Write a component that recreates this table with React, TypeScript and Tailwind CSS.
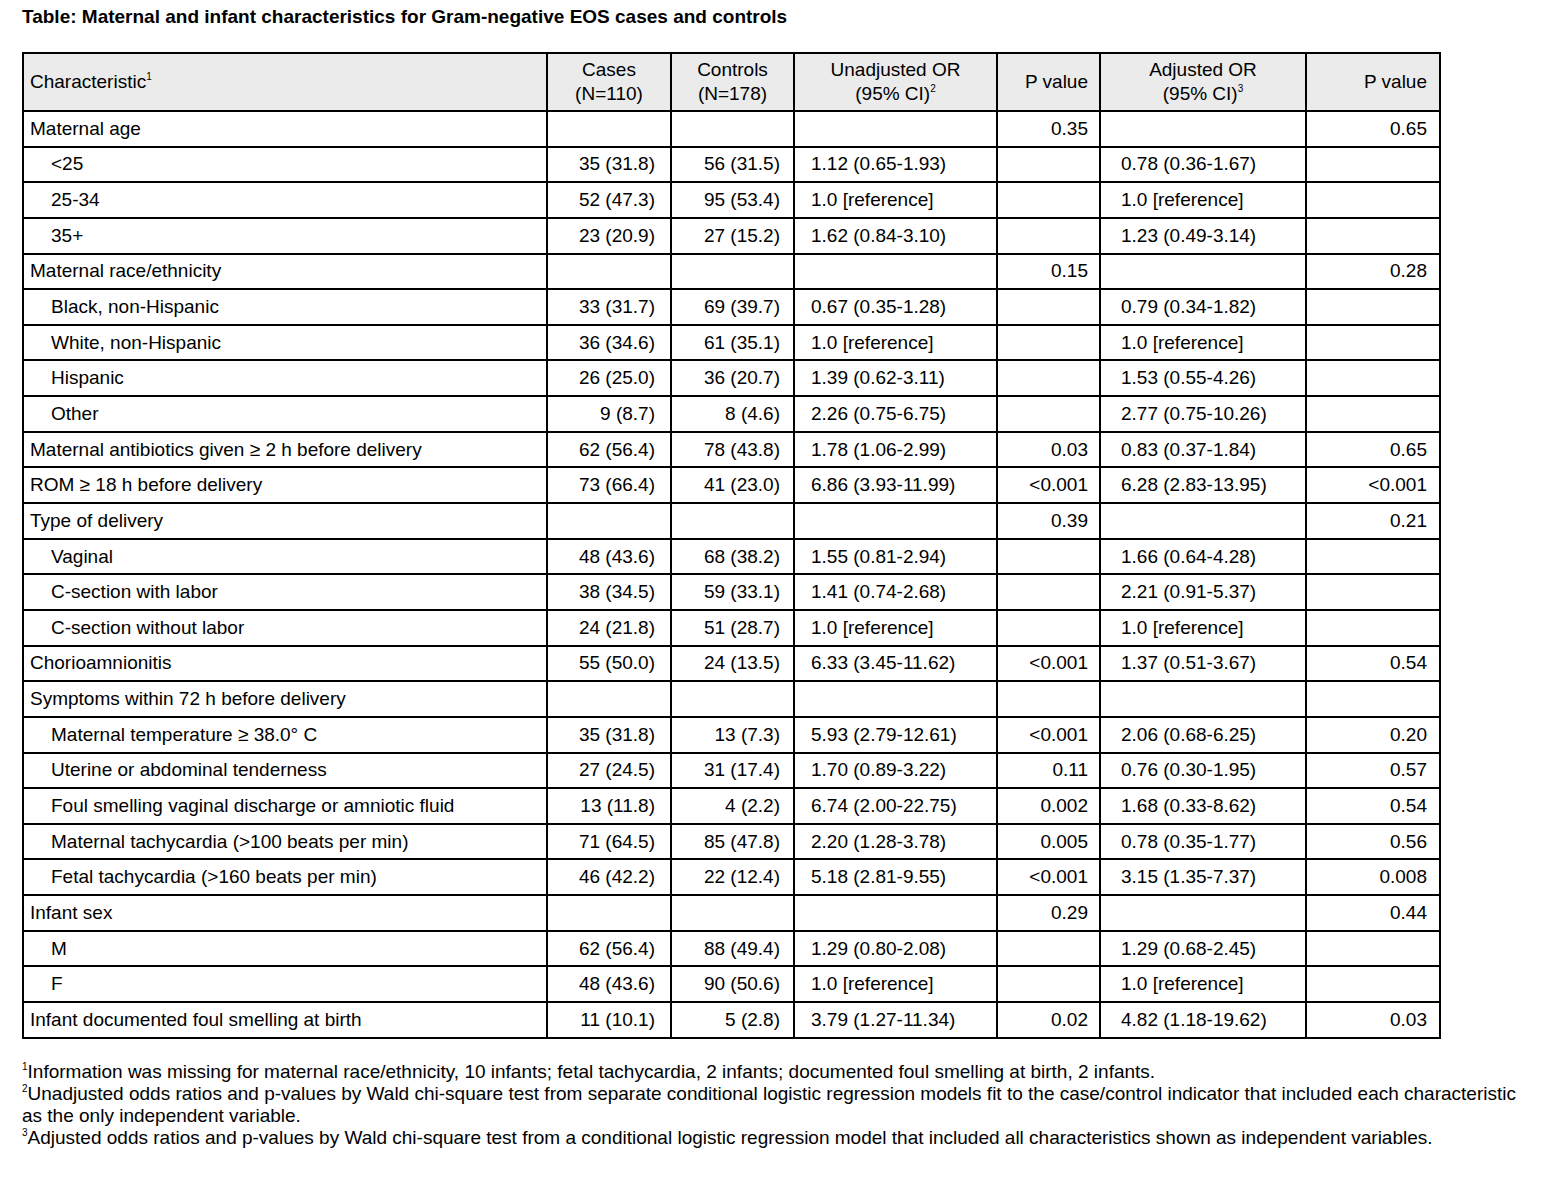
type Row = {
  label: string;
  indent?: boolean;
  cases?: string;
  controls?: string;
  uor?: string;
  up?: string;
  aor?: string;
  ap?: string;
};

const rows: Row[] = [
  { label: "Maternal age", up: "0.35", ap: "0.65" },
  { label: "<25", indent: true, cases: "35 (31.8)", controls: "56 (31.5)", uor: "1.12 (0.65-1.93)", aor: "0.78 (0.36-1.67)" },
  { label: "25-34", indent: true, cases: "52 (47.3)", controls: "95 (53.4)", uor: "1.0 [reference]", aor: "1.0 [reference]" },
  { label: "35+", indent: true, cases: "23 (20.9)", controls: "27 (15.2)", uor: "1.62 (0.84-3.10)", aor: "1.23 (0.49-3.14)" },
  { label: "Maternal race/ethnicity", up: "0.15", ap: "0.28" },
  { label: "Black, non-Hispanic", indent: true, cases: "33 (31.7)", controls: "69 (39.7)", uor: "0.67 (0.35-1.28)", aor: "0.79 (0.34-1.82)" },
  { label: "White, non-Hispanic", indent: true, cases: "36 (34.6)", controls: "61 (35.1)", uor: "1.0 [reference]", aor: "1.0 [reference]" },
  { label: "Hispanic", indent: true, cases: "26 (25.0)", controls: "36 (20.7)", uor: "1.39 (0.62-3.11)", aor: "1.53 (0.55-4.26)" },
  { label: "Other", indent: true, cases: "9 (8.7)", controls: "8 (4.6)", uor: "2.26 (0.75-6.75)", aor: "2.77 (0.75-10.26)" },
  { label: "Maternal antibiotics given \u2265 2 h before delivery", cases: "62 (56.4)", controls: "78 (43.8)", uor: "1.78 (1.06-2.99)", up: "0.03", aor: "0.83 (0.37-1.84)", ap: "0.65" },
  { label: "ROM \u2265 18 h before delivery", cases: "73 (66.4)", controls: "41 (23.0)", uor: "6.86 (3.93-11.99)", up: "<0.001", aor: "6.28 (2.83-13.95)", ap: "<0.001" },
  { label: "Type of delivery", up: "0.39", ap: "0.21" },
  { label: "Vaginal", indent: true, cases: "48 (43.6)", controls: "68 (38.2)", uor: "1.55 (0.81-2.94)", aor: "1.66 (0.64-4.28)" },
  { label: "C-section with labor", indent: true, cases: "38 (34.5)", controls: "59 (33.1)", uor: "1.41 (0.74-2.68)", aor: "2.21 (0.91-5.37)" },
  { label: "C-section without labor", indent: true, cases: "24 (21.8)", controls: "51 (28.7)", uor: "1.0 [reference]", aor: "1.0 [reference]" },
  { label: "Chorioamnionitis", cases: "55 (50.0)", controls: "24 (13.5)", uor: "6.33 (3.45-11.62)", up: "<0.001", aor: "1.37 (0.51-3.67)", ap: "0.54" },
  { label: "Symptoms within 72 h before delivery" },
  { label: "Maternal temperature \u2265 38.0\u00b0 C", indent: true, cases: "35 (31.8)", controls: "13 (7.3)", uor: "5.93 (2.79-12.61)", up: "<0.001", aor: "2.06 (0.68-6.25)", ap: "0.20" },
  { label: "Uterine or abdominal tenderness", indent: true, cases: "27 (24.5)", controls: "31 (17.4)", uor: "1.70 (0.89-3.22)", up: "0.11", aor: "0.76 (0.30-1.95)", ap: "0.57" },
  { label: "Foul smelling vaginal discharge or amniotic fluid", indent: true, cases: "13 (11.8)", controls: "4 (2.2)", uor: "6.74 (2.00-22.75)", up: "0.002", aor: "1.68 (0.33-8.62)", ap: "0.54" },
  { label: "Maternal tachycardia (>100 beats per min)", indent: true, cases: "71 (64.5)", controls: "85 (47.8)", uor: "2.20 (1.28-3.78)", up: "0.005", aor: "0.78 (0.35-1.77)", ap: "0.56" },
  { label: "Fetal tachycardia (>160 beats per min)", indent: true, cases: "46 (42.2)", controls: "22 (12.4)", uor: "5.18 (2.81-9.55)", up: "<0.001", aor: "3.15 (1.35-7.37)", ap: "0.008" },
  { label: "Infant sex", up: "0.29", ap: "0.44" },
  { label: "M", indent: true, cases: "62 (56.4)", controls: "88 (49.4)", uor: "1.29 (0.80-2.08)", aor: "1.29 (0.68-2.45)" },
  { label: "F", indent: true, cases: "48 (43.6)", controls: "90 (50.6)", uor: "1.0 [reference]", aor: "1.0 [reference]" },
  { label: "Infant documented foul smelling at birth", cases: "11 (10.1)", controls: "5 (2.8)", uor: "3.79 (1.27-11.34)", up: "0.02", aor: "4.82 (1.18-19.62)", ap: "0.03" },
];

const cell = "border-2 border-black h-[35.65px] p-0 align-middle whitespace-nowrap";

function Sup({ n }: { n: string }) {
  return <sup className="text-[10px] leading-none relative -top-[8px]">{n}</sup>;
}

export default function App() {
  return (
    <div
      className="bg-white text-black w-[1546px] h-[1178px] pl-[22px] pt-[6px]"
      style={{ fontFamily: '"Liberation Sans", Arial, sans-serif' }}
    >
      <h1 className="text-[19px] font-bold leading-[22px]">
        Table: Maternal and infant characteristics for Gram-negative EOS cases and controls
      </h1>
      <table className="mt-[24px] border-collapse text-[19px] leading-[22px]">
        <colgroup>
          <col className="w-[524px]" />
          <col className="w-[124px]" />
          <col className="w-[123px]" />
          <col className="w-[203px]" />
          <col className="w-[103px]" />
          <col className="w-[206px]" />
          <col className="w-[134px]" />
        </colgroup>
        <thead>
          <tr className="bg-[#ebebeb] h-[58px] leading-[24px]">
            <th className="border-2 border-black font-normal text-left pl-[6px]">
              Characteristic<Sup n="1" />
            </th>
            <th className="border-2 border-black font-normal text-center">
              Cases
              <br />
              (N=110)
            </th>
            <th className="border-2 border-black font-normal text-center">
              Controls
              <br />
              (N=178)
            </th>
            <th className="border-2 border-black font-normal text-center">
              Unadjusted OR
              <br />
              (95% CI)<Sup n="2" />
            </th>
            <th className="border-2 border-black font-normal text-right pr-[11px]">P value</th>
            <th className="border-2 border-black font-normal text-center">
              Adjusted OR
              <br />
              (95% CI)<Sup n="3" />
            </th>
            <th className="border-2 border-black font-normal text-right pr-[12px]">P value</th>
          </tr>
        </thead>
        <tbody>
          {rows.map((r) => (
            <tr key={r.label}>
              <td className={`${cell} ${r.indent ? "pl-[27px]" : "pl-[6px]"}`}>{r.label}</td>
              <td className={`${cell} text-right pr-[15px]`}>{r.cases}</td>
              <td className={`${cell} text-right pr-[13px]`}>{r.controls}</td>
              <td className={`${cell} pl-[16px]`}>{r.uor}</td>
              <td className={`${cell} text-right pr-[11px]`}>{r.up}</td>
              <td className={`${cell} pl-[20px]`}>{r.aor}</td>
              <td className={`${cell} text-right pr-[12px]`}>{r.ap}</td>
            </tr>
          ))}
        </tbody>
      </table>
      <div className="mt-[22px] pr-[12px] text-[19px] leading-[22px]">
        <p>
          <Sup n="1" />
          Information was missing for maternal race/ethnicity, 10 infants; fetal tachycardia, 2 infants; documented foul smelling at birth, 2 infants.
        </p>
        <p>
          <Sup n="2" />
          Unadjusted odds ratios and p-values by Wald chi-square test from separate conditional logistic regression models fit to the case/control indicator that included each characteristic as the only independent variable.
        </p>
        <p>
          <Sup n="3" />
          Adjusted odds ratios and p-values by Wald chi-square test from a conditional logistic regression model that included all characteristics shown as independent variables.
        </p>
      </div>
    </div>
  );
}
